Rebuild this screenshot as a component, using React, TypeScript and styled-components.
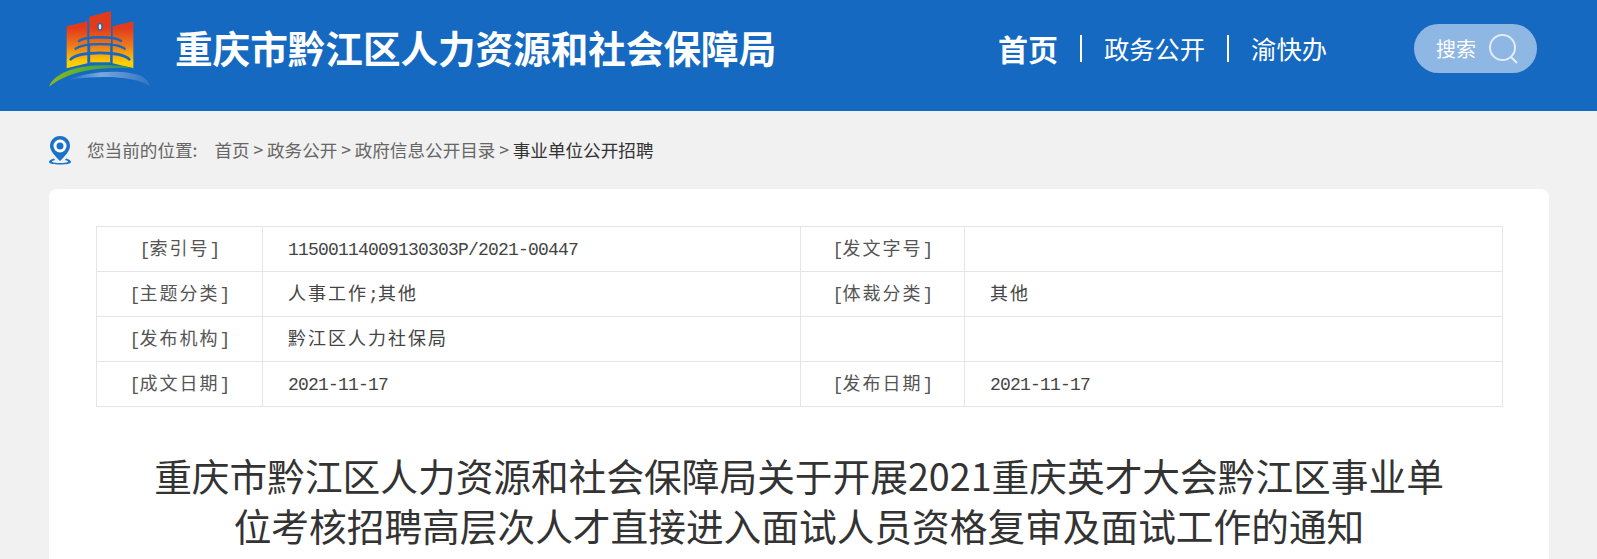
import styled, { createGlobalStyle } from "styled-components";

const GlobalStyle = createGlobalStyle`
	html, body {
		margin: 0;
		height: 559px;
		overflow: hidden;
		background-color: #f1f1f1;
	}
	body {
		font-family: "Noto Sans CJK SC", "Liberation Sans", sans-serif;
	}
`;

const Header = styled.header`
	display: flex;
	align-items: center;
	box-sizing: border-box;
	height: 111px;
	padding: 0 60px 14px 45px;
	background-color: #1569c1;
	color: #fff;
`;

const Logo = styled.svg`
	flex: none;
	width: 105px;
	height: 80px;
	margin: 3px 25px 0 0;
`;

const SiteName = styled.h1`
	margin: 0 0 3px;
	font-size: 37.6px;
	line-height: 50px;
	font-weight: 700;
	white-space: nowrap;
`;

const Nav = styled.nav`
	display: flex;
	align-items: center;
	gap: 22px;
	margin-left: auto;
`;

const NavItem = styled.a<{ $active?: boolean }>`
	padding-bottom: ${(p) => (p.$active ? "1px" : "2px")};
	font-size: ${(p) => (p.$active ? "30px" : "25.3px")};
	font-weight: ${(p) => (p.$active ? 700 : 400)};
	line-height: 36px;
	white-space: nowrap;
`;

const NavDivider = styled.span`
	width: 2px;
	height: 27px;
	background-color: #fff;
`;

const SearchBox = styled.div`
	display: flex;
	align-items: center;
	gap: 13px;
	box-sizing: border-box;
	width: 123px;
	height: 49px;
	margin-left: 87px;
	padding-left: 22px;
	border-radius: 25px;
	background-color: #8fb7e3;
	font-size: 20px;
`;

const Crumbs = styled.div`
	display: flex;
	align-items: center;
	height: 78px;
	padding-left: 48px;
	font-size: 17.6px;
	color: #666;
	white-space: nowrap;
`;

const PinIcon = styled.svg`
	flex: none;
	width: 24px;
	height: 30px;
	margin-right: 15px;
`;

const CrumbText = styled.span`
	padding-bottom: 2px;
`;

const CrumbLabel = styled(CrumbText)`
	margin-right: 17px;
`;

const CrumbLink = styled(CrumbText)<{ $current?: boolean }>`
	margin-right: 3.6px;
	color: ${(p) => (p.$current ? "#333" : "#666")};
`;

const Card = styled.main`
	box-sizing: border-box;
	width: 1500px;
	margin-left: 49px;
	padding: 37px 47px 40px 47px;
	border-radius: 8px 8px 0 0;
	background-color: #fff;
`;

const InfoTable = styled.table`
	width: 1406px;
	border-collapse: collapse;
	table-layout: fixed;
`;

const LabelCell = styled.td`
	box-sizing: border-box;
	height: 45px;
	padding: 0 0 5px;
	border: 1.5px solid #e5e5e5;
	text-align: center;
	font-size: 18px;
	letter-spacing: 2px;
	color: #555;
`;

const ValueCell = styled.td`
	box-sizing: border-box;
	height: 45px;
	padding: 0 0 5px 25px;
	border: 1.5px solid #e5e5e5;
	font-size: 18px;
	letter-spacing: 2px;
	color: #444;
`;

const Latin = styled.span`
	font-family: "Liberation Mono", monospace;
	letter-spacing: -0.8px;
`;

const Title = styled.h2`
	width: 1310px;
	margin: 43px auto 0;
	text-align: center;
	font-size: 37.7px;
	line-height: 50px;
	font-weight: 400;
	color: #333;
`;

const Label = ({ text }: { text: string }) => (
	<LabelCell>
		{text && (
			<>
				<Latin>[</Latin>
				{text}
				<Latin>]</Latin>
			</>
		)}
	</LabelCell>
);

const rows = [
	["索引号", "11500114009130303P/2021-00447", "发文字号", ""],
	["主题分类", "人事工作;其他", "体裁分类", "其他"],
	["发布机构", "黔江区人力社保局", "", ""],
	["成文日期", "2021-11-17", "发布日期", "2021-11-17"],
];

// digits and ascii sit in the mono face, the rest in the CJK one
const Value = ({ text }: { text: string }) => (
	<ValueCell>
		{text.split(/([\x20-\x7e]+)/).map((part, i) =>
			i % 2 ? <Latin key={i}>{part}</Latin> : part
		)}
	</ValueCell>
);

export default function App() {
	return (
		<>
			<GlobalStyle />
			<Header>
				<Logo viewBox="45 30 315 240">
					<defs>
						<linearGradient id="wall" x1="0" y1="33" x2="0" y2="205" gradientUnits="userSpaceOnUse">
							<stop offset="0.3" stopColor="#e23b1b" />
							<stop offset="0.62" stopColor="#ee7d1a" />
							<stop offset="0.9" stopColor="#ffcf00" />
						</linearGradient>
						<linearGradient id="grass" x1="57" y1="0" x2="310" y2="0" gradientUnits="userSpaceOnUse">
							<stop offset="0" stopColor="#8ab91e" />
							<stop offset="0.45" stopColor="#55ad35" />
							<stop offset="1" stopColor="#2f8f6a" />
						</linearGradient>
						<linearGradient id="water" x1="110" y1="0" x2="362" y2="0" gradientUnits="userSpaceOnUse">
							<stop offset="0" stopColor="#1569c1" />
							<stop offset="0.4" stopColor="#7aa8dc" />
							<stop offset="1" stopColor="#2f74c4" />
						</linearGradient>
					</defs>
					<path d="M110 79L172 64V190L110 205Z" fill="url(#wall)" />
					<path d="M178 50L243 33V187H178Z" fill="url(#wall)" />
					<path d="M248 79L310 64V205L248 190Z" fill="url(#wall)" />
					<ellipse cx="210" cy="80" rx="8" ry="12" fill="#1569c1" />
					<ellipse cx="210" cy="80" rx="4" ry="8" fill="#f7e9d8" />
					<path d="M147 123C165 108 255 108 273 123" fill="none" stroke="#1569c1" strokeWidth="7" strokeLinecap="round" />
					<path d="M137 146C160 128 262 128 284 146" fill="none" stroke="#1569c1" strokeWidth="7" strokeLinecap="round" />
					<path d="M122 178C145 152 275 152 298 178" fill="none" stroke="#1569c1" strokeWidth="8" strokeLinecap="round" />
					<path d="M178 130V187M243 130V187" stroke="#1569c1" strokeWidth="5" />
					<path d="M57 260C72 222 130 198 210 196C255 195 290 198 312 205C250 202 180 204 130 222C100 232 75 246 57 260Z" fill="url(#grass)" />
					<path d="M112 240C170 214 280 206 334 228C350 236 358 250 362 262C335 232 220 222 112 240Z" fill="url(#water)" />
				</Logo>
				<SiteName>重庆市黔江区人力资源和社会保障局</SiteName>
				<Nav>
					<NavItem $active>首页</NavItem>
					<NavDivider />
					<NavItem>政务公开</NavItem>
					<NavDivider />
					<NavItem>渝快办</NavItem>
				</Nav>
				<SearchBox>
					搜索
					<svg width="29" height="30" viewBox="0 0 29 30" fill="none" stroke="#e4ecf7" strokeWidth="2">
						<circle cx="13.5" cy="13.5" r="12.5" />
						<path d="M22 23L28 29" />
					</svg>
				</SearchBox>
			</Header>
			<Crumbs>
				<PinIcon viewBox="0 0 24 30">
					<path d="M12 1C6 1 2 5.500 2 11C2 16 8 22 12 26C16 22 22 16 22 11C22 5.500 18 1 12 1Z" fill="#1a72c9" />
					<circle cx="12" cy="11" r="6.500" fill="#fff" />
					<circle cx="12" cy="11" r="3.500" fill="#1a72c9" />
					<path d="M6 23.500C2.500 24.500 1 25.800 1 27C1 28.800 6 29.500 12 29.500C18 29.500 23 28.800 23 27C23 25.800 21.500 24.500 18 23.500L17 25C19 25.500 20 26.200 20 26.800C20 27.600 16 28 12 28C8 28 4 27.600 4 26.800C4 26.200 5 25.500 7 25Z" fill="#1a72c9" />
				</PinIcon>
				<CrumbLabel>您当前的位置:</CrumbLabel>
				<CrumbLink>首页 &gt;</CrumbLink>
				<CrumbLink>政务公开 &gt;</CrumbLink>
				<CrumbLink>政府信息公开目录 &gt;</CrumbLink>
				<CrumbLink $current>事业单位公开招聘</CrumbLink>
			</Crumbs>
			<Card>
				<InfoTable>
					<colgroup>
						<col width="166" />
						<col width="538" />
						<col width="164" />
						<col width="538" />
					</colgroup>
					<tbody>
						{rows.map((row) => (
							<tr key={row[0]}>
								<Label text={row[0]} />
								<Value text={row[1]} />
								<Label text={row[2]} />
								<Value text={row[3]} />
							</tr>
						))}
					</tbody>
				</InfoTable>
				<Title>
					重庆市黔江区人力资源和社会保障局关于开展2021重庆英才大会黔江区事业单位考核招聘高层次人才直接进入面试人员资格复审及面试工作的通知
				</Title>
			</Card>
		</>
	);
}
